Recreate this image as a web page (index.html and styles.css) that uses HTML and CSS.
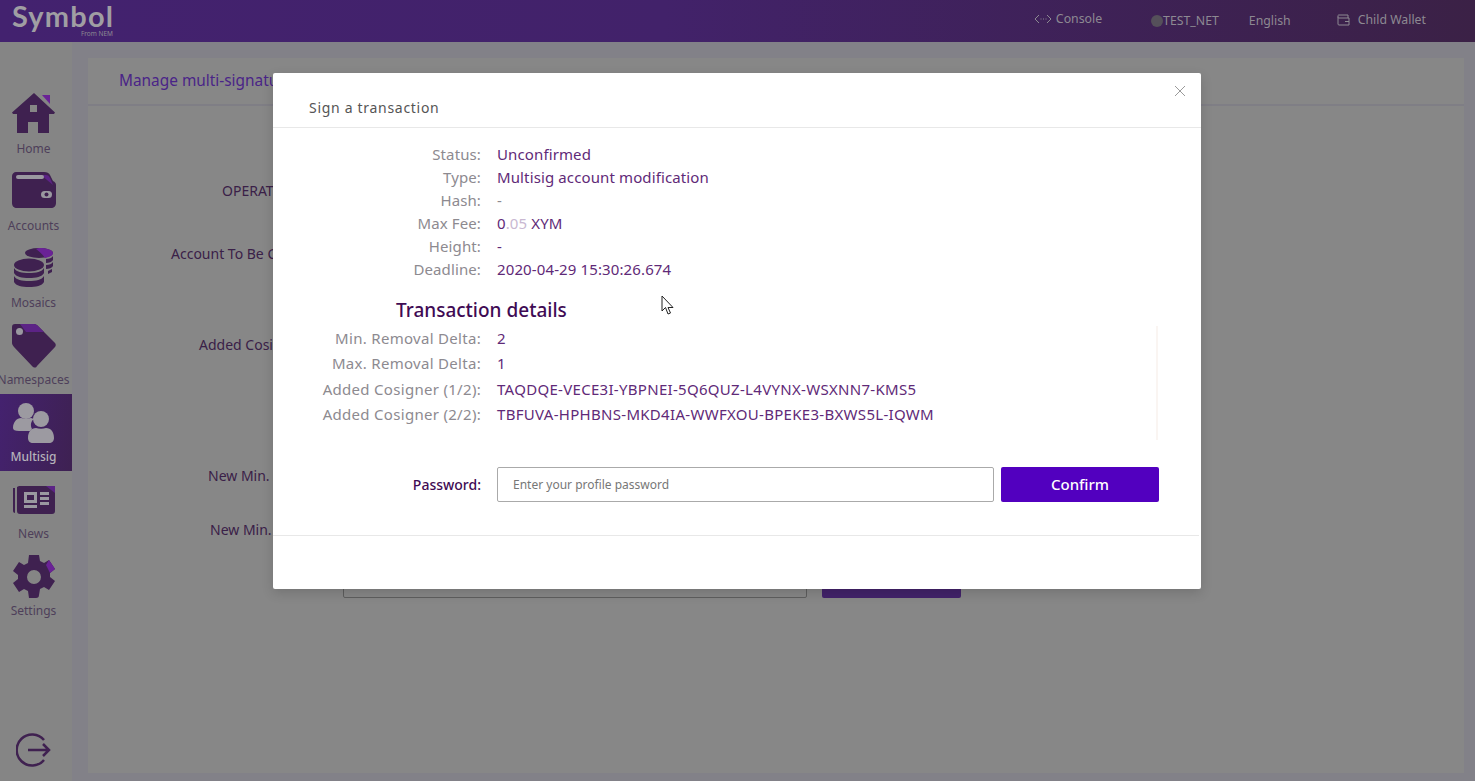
FILE: index.html
```html
<!DOCTYPE html>
<html>
<head>
  <title>Sign a transaction</title>
  <link rel="stylesheet" href="styles.css">
</head>
<body>
  <div class="topbar">
    <div class="logo">
      <span class="logo-name">Symbol</span>
      <span class="logo-from">From NEM</span>
    </div>
    <div class="topbar-right">
      <div class="top-item console">
        <svg width="18" height="10" viewBox="0 0 18 10" fill="none" stroke="#8d8992" stroke-width="1"><path d="M5 1 1 5l4 4M13 1l4 4-4 4"/><path d="M6.500 5h1M9 5h1M11.500 5h1"/></svg>
        <span>Console</span>
      </div>
      <div class="top-item network"><i class="dot"></i><span>TEST_NET</span></div>
      <div class="top-item language">English</div>
      <div class="top-item wallet">
        <svg width="13" height="12" viewBox="0 0 13 12" fill="none" stroke="#8d8992" stroke-width="1"><path d="M1 2.500V10a1 1 0 0 0 1 1h10V4H2a1 1 0 0 1-1-1.500 1 1 0 0 1 1-1.500h9v3"/><path d="M8 7.500h4"/></svg>
        <span>Child Wallet</span>
      </div>
    </div>
  </div>

  <div class="layout">
    <div class="sidebar">
      <div class="nav-item item-home">
        <svg width="44" height="42" viewBox="0 0 44 42"><path fill="#3f2150" d="M22 1 0 20.500l1 1.500h4v19h11V30h10v11h11V22h5l1-1.500z"/><path fill="#6a2296" d="M30 3h8v9z"/><rect x="18" y="13" width="7" height="7" fill="#868686"/></svg>
        <span>Home</span>
      </div>
      <div class="nav-item item-accounts">
        <svg width="44" height="37" viewBox="0 0 44 37"><path fill="#3f2150" d="M4 0h28c3 0 5 1 6 3l3 6c2 1 3 2 3 4v18c0 3-2 5-5 5H5c-3 0-5-2-5-5V4c0-2 2-4 4-4z"/><path fill="#5c2386" d="M29 3h5c2 0 3 1 4 3l3 7z"/><rect x="4" y="3" width="28" height="4" rx="2" fill="#9a98a0"/><rect x="29" y="19" width="11" height="7" rx="3.500" fill="#9a98a0"/><circle cx="34.500" cy="22.500" r="2" fill="#3f2150"/></svg>
        <span>Accounts</span>
      </div>
      <div class="nav-item item-mosaics">
        <svg width="40" height="40" viewBox="0 0 40 40"><g fill="#3f2150"><ellipse cx="25" cy="5" rx="14" ry="5"/><path d="M32 11c3 0 6-1 7-3v4c-1 2-4 3-7 3zM32 17c3 0 6-1 7-3v4c-1 2-4 3-7 3z M34 23l4-2v3l-4 2z"/><ellipse cx="15" cy="17" rx="15" ry="6.500"/><path d="M0 20c2 4 8 5 15 5s13-1 15-5v5c-2 4-8 5-15 5S2 29 0 25zM0 28c2 4 8 5 15 5s13-1 15-5v6c-2 4-8 5-15 5S2 38 0 34z"/></g><path fill="#6a2296" d="M25 0c8 0 14 2 14 5s-4 4-8 5c-2-3-5-6-9-9z"/></svg>
        <span>Mosaics</span>
      </div>
      <div class="nav-item item-namespaces">
        <svg width="44" height="44" viewBox="0 0 44 44"><path fill="#3f2150" d="M3 0h19c2 0 3 1 4 2l17 17c1 1 1 3 0 4L25 42c-1 2-3 2-5 0L2 23c-1-1-2-3-2-4V3c0-2 1-3 3-3z"/><path fill="#5c2386" d="M8 0h14c2 0 3 1 4 2l6 6H14z"/><circle cx="7.500" cy="7.500" r="3.500" fill="#9a98a0"/></svg>
        <span>Namespaces</span>
      </div>
      <div class="nav-item item-multisig active">
        <svg width="42" height="41" viewBox="0 0 42 41"><g fill="#9c9aa1"><circle cx="13" cy="9" r="8"/><path d="M0 26c0-6 4-10 8-10 3 1 7 1 10 0 1 0 2 1 3 1-3 2-4 6-2 10l-2 2H6c-4 0-6-1-6-3z"/><circle cx="28" cy="17" r="8"/><path d="M15 36c0-6 3-10 8-10 3 1 7 1 10 0 5 0 8 4 8 10 0 3-2 5-5 5H20c-3 0-5-2-5-5z"/></g></svg>
        <span>Multisig</span>
      </div>
      <div class="nav-item item-news">
        <svg width="42" height="29" viewBox="0 0 42 29"><path fill="#3f2150" d="M6 1h35a1 1 0 0 1 1 1v24a3 3 0 0 1-3 3H7a3 3 0 0 1-3-3V2zM0 3h2v25C1 28 0 27 0 26z"/><path fill="#5c2386" d="M33 1h8a1 1 0 0 1 1 1v6z"/><g fill="#9a98a0"><path d="M11 7h13v11H11zM14 10v5h7v-5z" fill-rule="evenodd"/><rect x="27" y="7" width="9" height="3"/><rect x="27" y="12" width="9" height="3"/><rect x="27" y="17" width="9" height="3"/><rect x="11" y="20" width="13" height="3"/></g></svg>
        <span>News</span>
      </div>
      <div class="nav-item item-settings">
        <svg width="44" height="44" viewBox="0 0 44 44"><path fill="#3f2150" fill-rule="evenodd" d="M17 0h10l1 6 4 2 5-3 6 9-5 4v4l5 4-6 9-5-3-4 2-1 6c0 2-1 3-3 3h-7l-1-7-4-2-5 3-6-9 5-4v-4l-5-4 6-9 5 3 4-2zM22 15a7 7 0 1 0 0 14 7 7 0 0 0 0-14z"/><path fill="#6a2296" d="m37 5 6 9-5 4-4-8z"/></svg>
        <span>Settings</span>
      </div>
      <div class="logout">
        <svg width="36" height="36" viewBox="0 0 36 36" fill="none" stroke="#3f2150" stroke-width="2.500"><path d="M28 8A15.500 15.500 0 1 0 28 28"/><path d="M12 18h21M27 12l6 6-6 6"/></svg>
      </div>
    </div>

    <div class="content">
      <div class="card">
        <div class="card-title">Manage multi-signature accounts</div>
        <div class="form">
          <div class="form-row row-operation">OPERATION</div>
          <div class="form-row row-account">Account To Be Converted</div>
          <div class="form-row row-cosig">Added Cosigners</div>
          <div class="form-row row-approval">New Min. Approval Delta</div>
          <div class="form-row row-removal">New Min. Removal Delta</div>
          <div class="form-actions">
            <div class="fake-input"></div>
            <div class="fake-button"></div>
          </div>
        </div>
      </div>
    </div>
  </div>

  <div class="modal">
    <div class="modal-header">
      <span class="modal-title">Sign a transaction</span>
      <svg class="modal-close" width="10" height="10" viewBox="0 0 10 10" stroke="#9a9a9a" stroke-width="1"><path d="M0 0l10 10M10 0 0 10"/></svg>
    </div>
    <div class="modal-body">
      <div class="info">
        <div class="info-row"><label>Status:</label><span>Unconfirmed</span></div>
        <div class="info-row"><label>Type:</label><span>Multisig account modification</span></div>
        <div class="info-row"><label>Hash:</label><span class="muted">-</span></div>
        <div class="info-row"><label>Max Fee:</label><span>0<em>.05</em> XYM</span></div>
        <div class="info-row"><label>Height:</label><span>-</span></div>
        <div class="info-row"><label>Deadline:</label><span>2020-04-29 15:30:26.674</span></div>
      </div>
      <h2>Transaction details</h2>
      <div class="details">
        <div class="info-row"><label>Min. Removal Delta:</label><span>2</span></div>
        <div class="info-row"><label>Max. Removal Delta:</label><span>1</span></div>
        <div class="info-row"><label>Added Cosigner (1/2):</label><span>TAQDQE-VECE3I-YBPNEI-5Q6QUZ-L4VYNX-WSXNN7-KMS5</span></div>
        <div class="info-row"><label>Added Cosigner (2/2):</label><span>TBFUVA-HPHBNS-MKD4IA-WWFXOU-BPEKE3-BXWS5L-IQWM</span></div>
      </div>
      <div class="password-row">
        <label>Password:</label>
        <input type="password" placeholder="Enter your profile password">
        <button>Confirm</button>
      </div>
    </div>
    <div class="modal-footer"></div>
  </div>

  <svg class="cursor" width="13" height="21" viewBox="0 0 13 21"><path fill="#fff" stroke="#222" stroke-width="1" d="M1 1v15l3.500-3.500L7 19l2.500-1-2.500-5.500h5z"/></svg>
</body>
</html>
```

FILE: styles.css
```css
* {
  box-sizing: border-box;
}

html, body {
  height: 100%;
}

body {
  margin: 0;
  overflow: hidden;
  background-color: #858585;
  font-family: "Noto Sans", sans-serif;
  font-size: 14px;
  display: flex;
  flex-direction: column;
}

.topbar {
  height: 42px;
  flex-shrink: 0;
  display: flex;
  justify-content: space-between;
  background: linear-gradient(90deg, #43226f 0%, #42226a 45%, #3b2146 100%);
  color: #8d8992;
  font-size: 12.300px;
}

.logo {
  width: 101px;
  margin-left: 12px;
  padding-top: 1px;
}

.logo-name {
  display: block;
  font-family: Lato, sans-serif;
  font-weight: 700;
  font-size: 29px;
  line-height: 29px;
  letter-spacing: 1.200px;
  color: #a09ea3;
}

.logo-from {
  display: block;
  text-align: right;
  font-size: 6.500px;
  line-height: 8px;
  color: #8d8992;
}

.topbar-right {
  display: flex;
  align-items: center;
  padding-right: 49px;
}

.top-item {
  display: flex;
  align-items: center;
}

.console {
  gap: 4px;
  margin-bottom: 5px;
}

.network {
  margin-left: 49px;
  margin-bottom: 1px;
}

.dot {
  width: 12px;
  height: 12px;
  border-radius: 50%;
  background-color: #55505a;
}

.language {
  margin-left: 30px;
  margin-bottom: 1px;
}

.wallet {
  gap: 8px;
  margin-left: 46px;
  margin-bottom: 3px;
}

.layout {
  flex: 1;
  display: flex;
  min-height: 0;
}

.sidebar {
  width: 72px;
  flex-shrink: 0;
  padding-top: 44px;
  display: flex;
  flex-direction: column;
}

.nav-item {
  height: 77px;
  display: flex;
  flex-direction: column;
  align-items: center;
  justify-content: flex-end;
  padding: 0 5px 6px 0;
  font-size: 12px;
  line-height: 16px;
  color: #4e3f5a;
  white-space: nowrap;
}

.item-home svg {
  margin-bottom: 7px;
}

.item-accounts svg {
  margin-bottom: 9px;
}

.item-mosaics svg {
  margin-bottom: 7px;
}

.item-namespaces svg {
  margin-bottom: 4px;
}

.item-multisig svg {
  margin-bottom: 6px;
}

.item-news svg {
  margin-bottom: 12px;
}

.item-settings svg {
  margin-bottom: 4px;
}

.nav-item.active {
  background: linear-gradient(100deg, #44226f 0%, #3e2152 100%);
  color: #b5b3ba;
  font-weight: 500;
}

.logout {
  margin-top: auto;
  margin-bottom: 13px;
  padding-right: 4px;
  display: flex;
  justify-content: center;
}

.content {
  flex: 1;
  padding: 16px 11px 8px 16px;
  background-color: #828188;
}

.card {
  height: 100%;
  background-color: #878787;
}

.card-title {
  height: 48px;
  padding: 12px 0 0 31px;
  border-bottom: 2px solid #7f7e85;
  font-size: 15.400px;
  line-height: 22px;
  color: #4a2488;
}

.form {
  padding-top: 75px;
  color: #3a2048;
}

.form-row {
  line-height: 20px;
}

.row-operation {
  padding-left: 134px;
}

.row-account {
  margin-top: 43px;
  padding-left: 83px;
}

.row-cosig {
  margin-top: 71px;
  padding-left: 111px;
}

.row-approval {
  margin-top: 111px;
  padding-left: 120px;
}

.row-removal {
  margin-top: 34px;
  padding-left: 122px;
}

.form-actions {
  display: flex;
  gap: 15px;
  margin-top: 20px;
  padding-left: 255px;
}

.fake-input {
  width: 464px;
  height: 38px;
  border: 1px solid #5e5e5e;
  border-radius: 2px;
}

.fake-button {
  width: 139px;
  height: 38px;
  border-radius: 2px;
  background-color: #42226a;
}

.modal {
  position: absolute;
  left: 273px;
  top: 73px;
  width: 928px;
  height: 516px;
  display: flex;
  flex-direction: column;
  background-color: #fff;
  border-radius: 2px;
  box-shadow: 0 4px 12px rgba(0, 0, 0, 0.15);
}

.modal-header {
  height: 55px;
  padding: 24px 0 0 36px;
  border-bottom: 1px solid #e8e8e8;
  position: relative;
}

.modal-title {
  font-size: 14px;
  line-height: 22px;
  letter-spacing: 0.700px;
  color: #555;
}

.modal-close {
  position: absolute;
  top: 13px;
  right: 16px;
}

.modal-body {
  height: 408px;
  padding-top: 15px;
  border-bottom: 1px solid #e8e8e8;
  margin-right: 2px;
}

.info-row {
  display: flex;
  height: 23px;
  font-size: 15px;
  line-height: 23px;
  letter-spacing: 0.120px;
}

.info-row label {
  width: 208px;
  flex-shrink: 0;
  text-align: right;
  color: #8d8a90;
}

.info-row span {
  margin-left: 16px;
  color: #5f2a78;
}

.info-row span.muted {
  color: #8d8a90;
}

.info-row em {
  font-style: normal;
  color: #c9b8d2;
}

h2 {
  margin: 16px 0 0 123px;
  font-size: 19px;
  line-height: 26px;
  font-weight: 500;
  color: #3f0b54;
}

.details {
  width: 885px;
  height: 114px;
  margin-top: 3px;
  border-right: 2px solid #faf5f2;
}

.details .info-row {
  height: 25.300px;
  line-height: 25px;
  letter-spacing: 0.300px;
}

.password-row {
  display: flex;
  align-items: center;
  margin-top: 27px;
}

.password-row label {
  width: 208px;
  text-align: right;
  font-weight: 500;
  color: #3f0b54;
}

.password-row input {
  width: 497px;
  height: 35px;
  margin-left: 16px;
  padding: 0 15px;
  border: 1px solid #aaa;
  border-radius: 2px;
  outline: none;
  font-family: inherit;
  font-size: 12px;
}

.password-row input::placeholder {
  color: #777;
}

.password-row button {
  width: 158px;
  height: 35px;
  margin-left: 7px;
  padding-bottom: 2px;
  border: none;
  border-radius: 2px;
  background-color: #5200bf;
  color: #fff;
  font-family: inherit;
  font-size: 15px;
  font-weight: 500;
}

.cursor {
  position: absolute;
  left: 661px;
  top: 295px;
}
```
